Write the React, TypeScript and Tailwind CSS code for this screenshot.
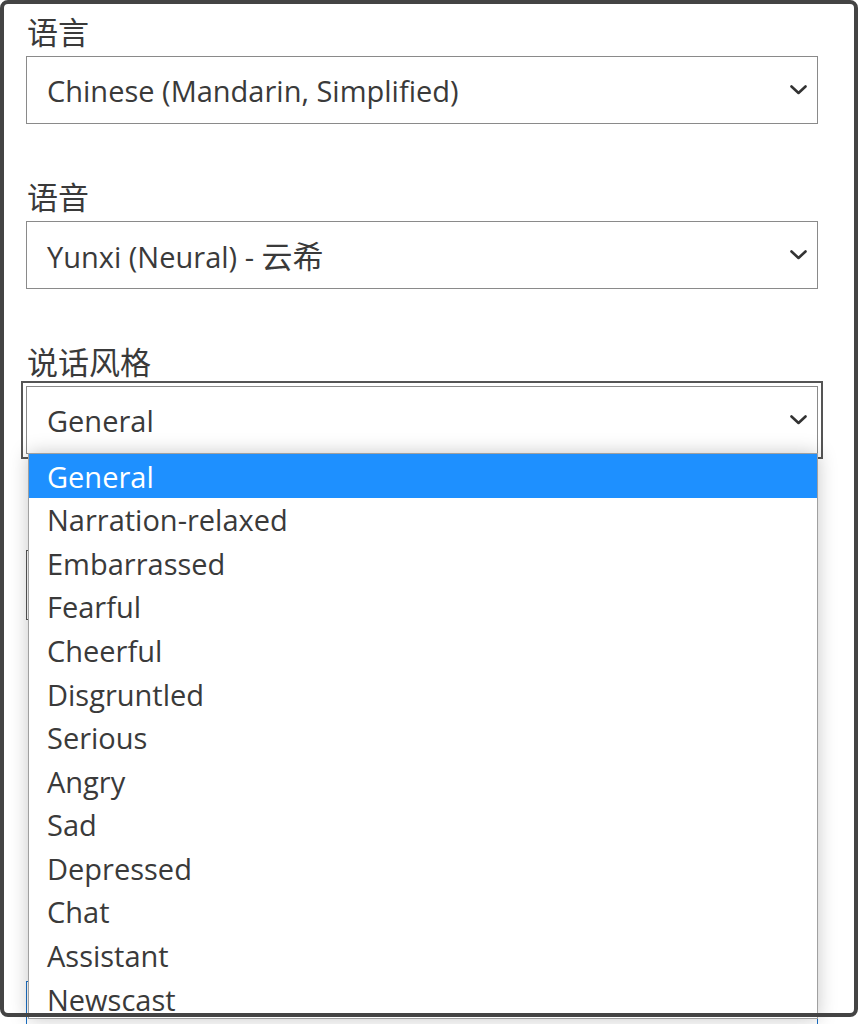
import React from "react";

const options = [
  "General",
  "Narration-relaxed",
  "Embarrassed",
  "Fearful",
  "Cheerful",
  "Disgruntled",
  "Serious",
  "Angry",
  "Sad",
  "Depressed",
  "Chat",
  "Assistant",
  "Newscast",
];

function Chevron() {
  return (
    <svg width="17" height="10" viewBox="0 0 17 10" className="shrink-0">
      <path d="M1.5 1.5 L8.5 8 L15.5 1.5" fill="none" stroke="#333" strokeWidth="2.6" strokeLinecap="round" strokeLinejoin="round" />
    </svg>
  );
}

function Select({ children, focused }: { children: React.ReactNode; focused?: boolean }) {
  return (
    <div
      className={
        "mt-[2px] w-[792px] h-[68px] border border-[#8a8a8a] bg-white flex items-center justify-between pl-[20px] pr-[10px] text-[29px] text-[#3a3a3a] " +
        (focused ? "outline-2 outline-[#555] outline-offset-[3px]" : "")
      }
    >
      <span className="pt-[2px]">{children}</span>
      <Chevron />
    </div>
  );
}

function Label({ text }: { text: string }) {
  return <div className="h-[44px] leading-[44px] text-[31px] text-[#3a3a3a] pl-[1px]">{text}</div>;
}

export default function App() {
  return (
    <div
      className="relative w-[865px] h-[1024px] bg-white overflow-hidden"
      style={{ fontFamily: '"Open Sans", "Noto Sans CJK SC", sans-serif' }}
    >
      <div className="pt-[10px] pl-[26px] flex flex-col gap-[51px]">
        <div className="flex flex-col">
          <Label text="语言" />
          <Select>Chinese (Mandarin, Simplified)</Select>
        </div>
        <div className="flex flex-col">
          <Label text="语音" />
          <Select>
            Yunxi (Neural) - <span className="text-[31px]">云希</span>
          </Select>
        </div>
        <div className="relative flex flex-col">
          <Label text="说话风格" />
          <Select focused>General</Select>
          <div className="absolute z-10 top-[113px] left-[2px] w-[790px] h-[566px] bg-white border border-[#a0a0a0] shadow-[0_0_18px_rgba(0,0,0,0.22)]">
            {options.map((o, i) => (
              <div
                key={o}
                className={
                  "h-[43.6px] flex items-center pl-[18px] pt-[1px] text-[29px] " +
                  (i === 0 ? "bg-[#1e90ff] text-white" : "text-[#3a3a3a]")
                }
              >
                {o}
              </div>
            ))}
          </div>
        </div>
        <div className="mt-[45px] w-[792px] h-[70px] border border-[#555]" />
        <div className="mt-[310px] w-[792px] h-[60px] border border-[#1a6fc4]" />
      </div>
      <div className="pointer-events-none absolute left-0 top-0 w-[858px] h-[1017px] border-4 border-[#444] rounded-[8px] z-20" />
    </div>
  );
}
